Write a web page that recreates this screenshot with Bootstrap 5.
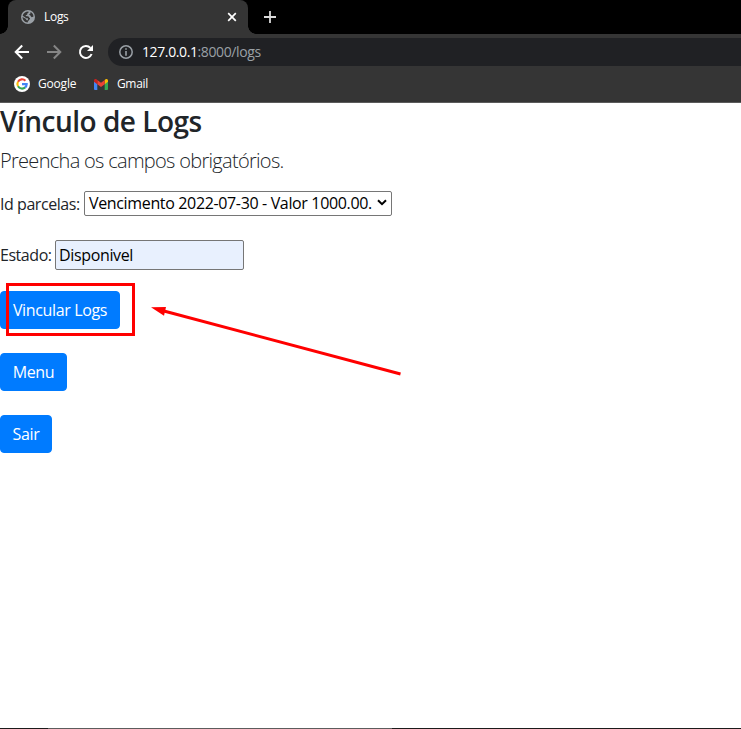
<!DOCTYPE html>
<html lang="pt-BR">
<head>
<meta charset="utf-8">
<meta name="viewport" content="width=device-width, initial-scale=1">
<title>Logs</title>
<link href="https://cdn.jsdelivr.net/npm/bootstrap@5.3.0/dist/css/bootstrap.min.css" rel="stylesheet">
<style>
body{font-family:"Open Sans","Noto Sans",sans-serif;font-size:16px;color:#212529;height:729px;overflow:hidden}
svg{display:block;flex:none}
.chrome{background:#353535;height:103px;border-bottom:1px solid #5b5b5b;color:#fff;font-size:12px}
.tabstrip{height:34px;background:#000;padding-left:8px}
.browser-tab{width:240px;height:34px;background:#353535;border-radius:8px 8px 0 0;padding:0 11px 0 13px;position:relative}
.browser-tab::before,.browser-tab::after{content:"";position:absolute;bottom:0;width:8px;height:8px}
.browser-tab::before{left:-8px;background:radial-gradient(circle at 0 0,#000 7.5px,#353535 8px)}
.browser-tab::after{right:-8px;background:radial-gradient(circle at 100% 0,#000 7.5px,#353535 8px)}
.toolbar{height:36px;padding-left:14px}
.omnibox{height:28px;background:#202124;border-radius:14px 0 0 14px;margin-left:14px;padding-left:11px;font-size:14px;color:#9aa0a6}
.bookmarks{height:28px;padding-left:14px}
.tab-title{letter-spacing:-.3px;margin-left:9px}
.url{letter-spacing:-.39px;margin-left:9px;padding-bottom:2px}
.bm-google{letter-spacing:-.2px;width:40px}
.bm-gmail{letter-spacing:-.35px;margin-left:9px}
h1{font-size:28px;letter-spacing:-.5px;font-weight:600;line-height:33.6px;padding-top:2px;margin-bottom:7px}
.intro{font-size:20px;font-weight:300;line-height:30px;margin-bottom:15.4px;letter-spacing:-.7px}
.field-row{line-height:24px;letter-spacing:-.45px}
.lbl-parcelas{width:84px;padding-top:1px}
.lbl-estado{width:55px}
.parcelas{width:308px;height:25px;border:1px solid #767676;border-radius:2px;color:#000;padding:0 4px;letter-spacing:-.35px}
.parcelas svg{margin-bottom:1px}
.estado{width:189px;height:30px;border:1px solid #767676;border-radius:2px;background:#e8f0fe;color:#000;padding:1px 3px;letter-spacing:-.35px}
.actions{margin-top:21px}
.btn-primary{--bs-btn-bg:#007bff;--bs-btn-border-color:#007bff;--bs-btn-border-radius:4px;height:38px;padding:6px 0;letter-spacing:-.35px}
.w-vincular{width:120px}.w-menu{width:67px}.w-sair{width:52px}
.marker{left:6px;top:283px;width:129px;height:53px;border:3px solid #f00}
.arrow{left:145px;top:300px}
.statusline{height:1px;background:linear-gradient(90deg,#1b1b1b 48px,#5c5c5c 48px 392px,#1b1b1b 392px)}
</style>
<script src="https://cdn.jsdelivr.net/npm/bootstrap@5.3.0/dist/js/bootstrap.bundle.min.js"></script>
</head>
<body class="bg-white position-relative d-flex flex-column">
<header class="chrome">
  <div class="tabstrip d-flex align-items-center">
    <div class="browser-tab d-flex align-items-center">
      <svg width="14" height="14" viewBox="0 0 14 14"><circle cx="7" cy="7" r="7" fill="#9aa0a6"/><path d="M7.4 1.6C8 2.6 7.2 3 6.3 3.4 6.6 4.6 5.6 4.8 4.8 5.1 4.6 6 5 6.4 6.2 6.2 7.8 6.1 8.1 6.9 8.2 7.8 9.3 8 9.3 9.2 8.4 9.6 7.6 10 7.8 11 6.9 11.6L6.6 12.5C3.8 12.3 1.5 10 1.5 7L4.3 8.6C5.2 8.8 5.2 9.6 5.6 10.3L6.8 10.2 7 8.3C5.5 8.4 4.6 7.7 3.6 6.9L1.7 5.8C2.2 3.4 4.4 1.6 7.4 1.6ZM9.5 2.1C11.3 3 12.4 4.7 12.5 6.4L10.8 7.2C9.7 7 9.9 5.8 9.1 5.3L8 4.5 9.4 3.6Z" fill="#353535"/></svg>
      <span class="tab-title">Logs</span>
      <svg class="ms-auto" width="10" height="10" viewBox="0 0 10 10"><path d="M1.2 1.2 8.8 8.8M8.8 1.2 1.2 8.8" stroke="#fff" stroke-width="1.7"/></svg>
    </div>
    <svg class="ms-3" width="12" height="12" viewBox="0 0 12 12"><path d="M6 0V12M0 6H12" stroke="#dadada" stroke-width="1.8"/></svg>
  </div>
  <div class="toolbar d-flex align-items-center">
    <svg width="16" height="16" viewBox="0 0 16 16"><path d="M15 8H2M8.2 1.5 1.7 8 8.2 14.5" fill="none" stroke="#fff" stroke-width="2"/></svg>
    <svg class="ms-3" width="16" height="16" viewBox="0 0 16 16"><path d="M1 8H14M7.8 1.5 14.3 8 7.8 14.5" fill="none" stroke="#868686" stroke-width="2"/></svg>
    <svg class="ms-3" width="16" height="16" viewBox="0 0 16 16"><path d="M13.6 10A6 6 0 1 1 12.4 3.9" fill="none" stroke="#fff" stroke-width="2"/><path d="M15 1V7H9Z" fill="#fff"/></svg>
    <div class="omnibox flex-grow-1 d-flex align-items-center">
      <svg width="14" height="14" viewBox="0 0 14 14"><circle cx="7" cy="7" r="6.2" fill="none" stroke="#9aa0a6" stroke-width="1.5"/><path d="M7 3.3V4.8M7 6V10.7" stroke="#9aa0a6" stroke-width="1.6"/></svg>
      <span class="url"><span class="text-white">127.0.0.1</span>:8000/logs</span>
    </div>
  </div>
  <div class="bookmarks d-flex align-items-center">
    <svg width="16" height="16" viewBox="0 0 16 16"><circle cx="8" cy="8" r="8" fill="#fff"/><g fill="none" stroke-width="2.1"><path d="M4 5.7A4.7 4.7 0 0 1 11.4 4.7" stroke="#ea4335"/><path d="M4 10.3A4.7 4.7 0 0 1 4 5.7" stroke="#fbbc05"/><path d="M11.2 11.4A4.7 4.7 0 0 1 4 10.3" stroke="#34a853"/><path d="M8 8.1H12.7A4.7 4.7 0 0 1 11.1 11.5" stroke="#4285f4"/></g></svg>
    <span class="bm-google ms-2">Google</span>
    <svg class="ms-3" width="14" height="11" viewBox="0 0 14 11"><path d="M0 2V10Q0 11 1 11H3.3V4.5Z" fill="#4285f4"/><path d="M14 2V10Q14 11 13 11H10.7V4.5Z" fill="#34a853"/><path d="M10.7 1V5.3L14 2.8V1.5C14 0 12.2-.5 11.2.5Z" fill="#fbbc04"/><path d="M3.3 5.3V1L7 3.8 10.7 1V5.3L7 8.1Z" fill="#ea4335"/><path d="M0 1.5V2.8L3.3 5.3V1L2.7.5C1.7-.4 0 0 0 1.5Z" fill="#c5221f"/></svg>
    <span class="bm-gmail">Gmail</span>
  </div>
</header>
<main class="flex-grow-1">
  <h1>Vínculo de Logs</h1>
  <p class="intro">Preencha os campos obrigatórios.</p>
  <div class="field-row d-flex align-items-center mb-4">
    <span class="lbl-parcelas">Id parcelas:</span>
    <div class="parcelas d-flex align-items-center justify-content-between" role="combobox">
      <span class="text-nowrap">Vencimento 2022-07-30 - Valor 1000.00.</span>
      <svg width="10" height="7" viewBox="0 0 10 7"><path d="M1 1.2 5 5.2 9 1.2" fill="none" stroke="#000" stroke-width="2"/></svg>
    </div>
  </div>
  <div class="field-row d-flex align-items-center">
    <span class="lbl-estado">Estado:</span>
    <input class="estado" type="text" value="Disponivel" aria-label="Estado">
  </div>
  <div class="actions d-flex flex-column align-items-start gap-4">
    <button class="btn btn-primary w-vincular">Vincular Logs</button>
    <button class="btn btn-primary w-menu">Menu</button>
    <button class="btn btn-primary w-sair">Sair</button>
  </div>
</main>
<div class="statusline"></div>
<div class="marker position-absolute"></div>
<svg class="arrow position-absolute" width="260" height="80" viewBox="0 0 260 80"><path d="M18 10.8 255.5 74" stroke="#f00" stroke-width="3"/><path d="M6 7.3 21 7 19 15.8Z" fill="#f00"/></svg>
</body>
</html>
